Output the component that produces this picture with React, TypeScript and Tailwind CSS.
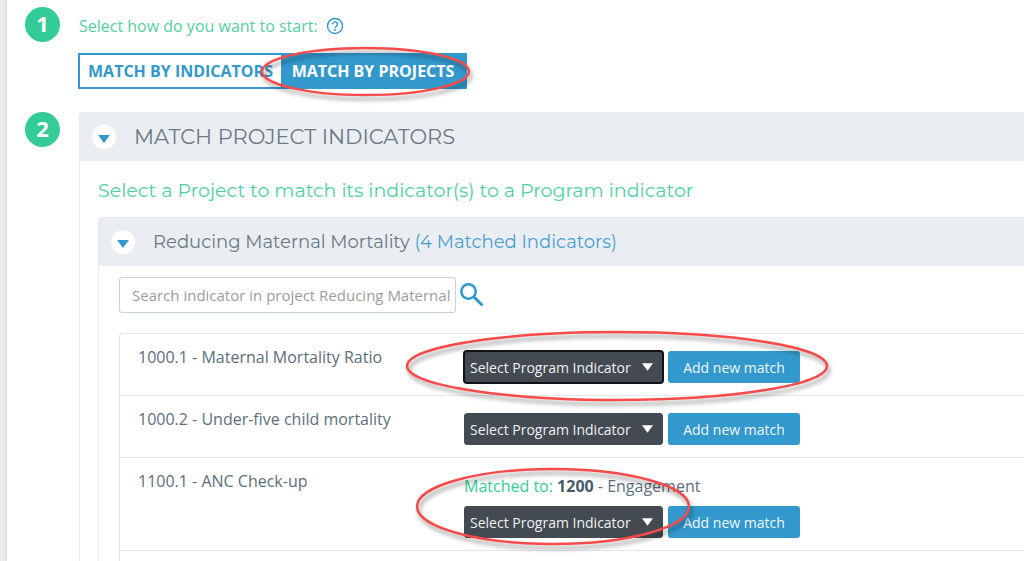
import React, { useState } from 'react';

interface Indicator {
  code: string;
  name: string;
  matchedTo?: { code: string; name: string };
  focused?: boolean;
  callout?: 'wide' | 'narrow';
}

const indicators: Indicator[] = [
  { code: '1000.1', name: 'Maternal Mortality Ratio', focused: true, callout: 'wide' },
  { code: '1000.2', name: 'Under-five child mortality' },
  {
    code: '1100.1',
    name: 'ANC Check-up',
    matchedTo: { code: '1200', name: 'Engagement' },
    callout: 'narrow'
  }
];

const Callout = ({ className }: { className: string }) => (
  <div
    aria-hidden="true"
    className={`pointer-events-none absolute z-10 ${className}`}
  >
    <svg className="h-full w-full overflow-visible drop-shadow-[2px_4px_2px_rgba(0,0,0,0.4)]">
      <ellipse cx="50%" cy="50%" rx="50%" ry="50%" fill="none" stroke="#f94a4a" strokeWidth="2.4" />
    </svg>
  </div>
);

const StepNumber = ({ value }: { value: number }) => (
  <div className="flex h-[35px] w-[35px] shrink-0 items-center justify-center rounded-full bg-[#33cc99] pb-1 text-[22px] leading-none font-bold text-white">
    {value}
  </div>
);

const Triangle = ({ className }: { className: string }) => (
  <svg viewBox="0 0 12 8" className={className} fill="currentColor" aria-hidden="true">
    <path d="M0 0h12L6 8z" />
  </svg>
);

const CollapseButton = ({ label, onClick }: { label: string; onClick: () => void }) => (
  <button
    type="button"
    aria-label={label}
    onClick={onClick}
    className="flex h-6 w-6 shrink-0 items-center justify-center rounded-full bg-white pt-1 text-[#3399cc]"
  >
    <Triangle className="h-2 w-3" />
  </button>
);

const IndicatorRow = ({ indicator }: { indicator: Indicator }) => {
  const { code, name, matchedTo, focused, callout } = indicator;

  return (
    <div className="flex border-b border-[#e6e6e6] pt-[17px] pb-3 pl-[18px]">
      <div className="w-[326px] shrink-0 text-[16px] leading-3 text-[#5c6f7b]">
        {code} - {name}
      </div>
      <div className="relative">
        {matchedTo && (
          <div className="mb-[9px] text-[16px] leading-[22px] text-[#5c6f7b]">
            <span className="text-[#33cc99]">Matched to:</span>{' '}
            <span className="font-bold text-[#475b68]">{matchedTo.code}</span> - {matchedTo.name}
          </div>
        )}
        <div className="flex gap-[5px]">
          <div className="relative">
            <select
              aria-label={`Program indicator for ${code}`}
              className={`h-8 w-[199px] appearance-none rounded-[3px] border bg-[#434a52] pl-[5px] text-[14px] font-medium text-[#f0f1f2] outline-none ${
                focused ? 'border-[#101214] ring-1 ring-[#101214]' : 'border-[#434a52]'
              }`}
            >
              <option>Select Program Indicator</option>
            </select>
            <Triangle className="pointer-events-none absolute top-3 right-[10px] h-2 w-[11px] text-white" />
          </div>
          <button
            type="button"
            className="h-8 w-[132px] rounded-[3px] bg-[#3399cc] text-[14px] font-medium text-[#eef7fb]"
          >
            Add new match
          </button>
        </div>
        {callout === 'wide' && <Callout className="-top-[19px] -left-[57px] h-[68px] w-[420px]" />}
        {callout === 'narrow' && <Callout className="-top-[6px] -left-[47px] h-[75px] w-[272px]" />}
      </div>
    </div>
  );
};

export default function App() {
  const [mode, setMode] = useState('projects');
  const [panelOpen, setPanelOpen] = useState(true);
  const [projectOpen, setProjectOpen] = useState(true);
  const [searchTerm, setSearchTerm] = useState('');

  const tabClass = (value: string) =>
    mode === value ? 'bg-[#3399cc] text-white' : 'bg-white text-[#3399cc]';

  return (
    <div className="flex min-h-screen overflow-hidden bg-[#e9edf2] pl-[7px] font-['Open_Sans','Noto_Sans',sans-serif]">
      <main className="flex min-w-0 flex-1 flex-col bg-white pt-[7px] pl-[18px] shadow-[0_0_2px_rgba(0,0,0,0.2)]">
        {/* Step 1 */}
        <section className="flex gap-[18px]">
          <StepNumber value={1} />
          <div>
            <div className="flex h-[38px] items-center gap-2 pl-px text-[16px] text-[#55cfa1]">
              Select how do you want to start:
              <button type="button" aria-label="Help" className="text-[#3399cc]">
                <svg viewBox="0 0 18 18" className="h-[18px] w-[18px]" fill="none" stroke="currentColor">
                  <circle cx="9" cy="9" r="7.5" strokeWidth="1.4" />
                  <path d="M6.6 7.3a2.4 2.4 0 1 1 3.7 2c-.8.6-1.3 1-1.3 1.9" strokeWidth="1.4" />
                  <circle cx="9" cy="13" r=".9" fill="currentColor" stroke="none" />
                </svg>
              </button>
            </div>
            <div className="relative mt-2 flex w-max border-2 border-[#3399cc] text-[16px] font-bold">
              <button
                type="button"
                onClick={() => setMode('indicators')}
                className={`h-8 w-[201px] whitespace-nowrap ${tabClass('indicators')}`}
              >
                MATCH BY INDICATORS
              </button>
              <button
                type="button"
                onClick={() => setMode('projects')}
                className={`h-8 w-[184px] whitespace-nowrap ${tabClass('projects')}`}
              >
                MATCH BY PROJECTS
              </button>
              <Callout className="-top-[7px] left-[182px] h-[47px] w-[207px]" />
            </div>
          </div>
        </section>

        {/* Step 2 */}
        <section className="mt-[23px] flex flex-1 gap-[19px]">
          <StepNumber value={2} />
          <div className="flex min-w-0 flex-1 flex-col rounded-tl border-t border-l border-[#e6e9ed]">
            <div className="flex h-12 items-center gap-[18px] bg-[#eaedf2] pl-3">
              <CollapseButton label="Toggle project indicators" onClick={() => setPanelOpen(!panelOpen)} />
              <h2 className="font-[Montserrat,Inter,sans-serif] text-[21px] text-[#6b7a85]">
                MATCH PROJECT INDICATORS
              </h2>
            </div>
            {panelOpen && (
              <div className="flex flex-1 flex-col pt-4 pl-[18px]">
                <p className="font-[Montserrat,Inter,sans-serif] text-[19px] leading-7 text-[#4fd0a2]">
                  Select a Project to match its indicator(s) to a Program indicator
                </p>
                <div className="mt-3 flex flex-1 flex-col rounded-tl border-t border-l border-[#e6e9ed]">
                  <div className="flex h-12 items-center gap-[18px] bg-[#eaedf2] pl-3">
                    <CollapseButton
                      label="Toggle Reducing Maternal Mortality"
                      onClick={() => setProjectOpen(!projectOpen)}
                    />
                    <h3 className="font-[Montserrat,Inter,sans-serif] text-[18px] text-[#6b7a85]">
                      Reducing Maternal Mortality{' '}
                      <span className="text-[#4a9fd0]">(4 Matched Indicators)</span>
                    </h3>
                  </div>
                  {projectOpen && (
                    <div className="flex flex-1 flex-col pt-[11px] pl-5">
                      <div className="flex items-center gap-1">
                        <input
                          type="text"
                          aria-label="Search indicator"
                          placeholder="Search indicator in project Reducing Maternal"
                          value={searchTerm}
                          onChange={(e) => setSearchTerm(e.target.value)}
                          className="h-9 w-[337px] rounded-[3px] border border-[#c8d0d8] pr-1 pl-3 text-[15px] placeholder:text-[#9c9c9c]"
                        />
                        <button type="button" aria-label="Search" className="text-[#3399cc]">
                          <svg viewBox="0 0 24 24" className="h-6 w-6" fill="none" stroke="currentColor">
                            <circle cx="8.5" cy="8.5" r="7.2" strokeWidth="2.6" />
                            <path d="M14 14l8.5 8.5" strokeWidth="3" />
                          </svg>
                        </button>
                      </div>
                      <div className="mt-5 flex-1 rounded-tl border-t border-l border-[#e6e6e6]">
                        {indicators.map((indicator) => (
                          <IndicatorRow key={indicator.code} indicator={indicator} />
                        ))}
                      </div>
                    </div>
                  )}
                </div>
              </div>
            )}
          </div>
        </section>
      </main>
    </div>
  );
}
